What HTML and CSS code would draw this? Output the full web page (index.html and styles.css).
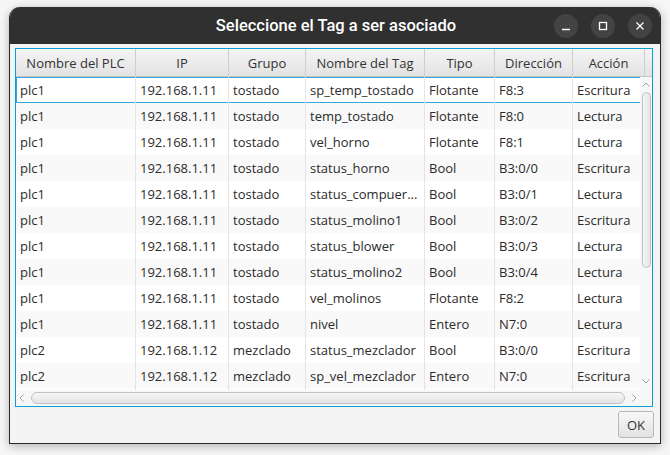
FILE: index.html
```html
<!DOCTYPE html>
<html>
<head>
<meta charset="utf-8">
<link rel="stylesheet" href="styles.css">
</head>
<body>
<div class="window">
  <div class="titlebar">
    <div class="title">Seleccione el Tag a ser asociado</div>
    <div class="wbtns">
      <div class="wbtn"><svg width="10" height="10" viewBox="0 0 10 10"><path d="M1 8.5h8" stroke="#fff" stroke-width="1.4"/></svg></div>
      <div class="wbtn"><svg width="10" height="10" viewBox="0 0 10 10"><rect x="1.5" y="1.5" width="7" height="7" fill="none" stroke="#fff" stroke-width="1.3"/></svg></div>
      <div class="wbtn"><svg width="10" height="10" viewBox="0 0 10 10"><path d="M1.5 1.5l7 7M8.5 1.5l-7 7" stroke="#fff" stroke-width="1.3"/></svg></div>
    </div>
  </div>
  <div class="content">
    <div class="table">
      <div class="header">
        <div class="hc c1">Nombre del PLC</div>
        <div class="hc c2">IP</div>
        <div class="hc c3">Grupo</div>
        <div class="hc c4">Nombre del Tag</div>
        <div class="hc c5">Tipo</div>
        <div class="hc c6">Dirección</div>
        <div class="hc c7">Acción</div>
        <div class="hc filler"></div>
      </div>
      <div class="body">
        <div class="rows">
          <div class="row focus"><div class="cell c1">plc1</div><div class="cell c2">192.168.1.11</div><div class="cell c3">tostado</div><div class="cell c4">sp_temp_tostado</div><div class="cell c5">Flotante</div><div class="cell c6">F8:3</div><div class="cell c7">Escritura</div></div>
          <div class="row"><div class="cell c1">plc1</div><div class="cell c2">192.168.1.11</div><div class="cell c3">tostado</div><div class="cell c4">temp_tostado</div><div class="cell c5">Flotante</div><div class="cell c6">F8:0</div><div class="cell c7">Lectura</div></div>
          <div class="row"><div class="cell c1">plc1</div><div class="cell c2">192.168.1.11</div><div class="cell c3">tostado</div><div class="cell c4">vel_horno</div><div class="cell c5">Flotante</div><div class="cell c6">F8:1</div><div class="cell c7">Lectura</div></div>
          <div class="row"><div class="cell c1">plc1</div><div class="cell c2">192.168.1.11</div><div class="cell c3">tostado</div><div class="cell c4">status_horno</div><div class="cell c5">Bool</div><div class="cell c6">B3:0/0</div><div class="cell c7">Escritura</div></div>
          <div class="row"><div class="cell c1">plc1</div><div class="cell c2">192.168.1.11</div><div class="cell c3">tostado</div><div class="cell c4">status_compuer...</div><div class="cell c5">Bool</div><div class="cell c6">B3:0/1</div><div class="cell c7">Lectura</div></div>
          <div class="row"><div class="cell c1">plc1</div><div class="cell c2">192.168.1.11</div><div class="cell c3">tostado</div><div class="cell c4">status_molino1</div><div class="cell c5">Bool</div><div class="cell c6">B3:0/2</div><div class="cell c7">Escritura</div></div>
          <div class="row"><div class="cell c1">plc1</div><div class="cell c2">192.168.1.11</div><div class="cell c3">tostado</div><div class="cell c4">status_blower</div><div class="cell c5">Bool</div><div class="cell c6">B3:0/3</div><div class="cell c7">Lectura</div></div>
          <div class="row"><div class="cell c1">plc1</div><div class="cell c2">192.168.1.11</div><div class="cell c3">tostado</div><div class="cell c4">status_molino2</div><div class="cell c5">Bool</div><div class="cell c6">B3:0/4</div><div class="cell c7">Lectura</div></div>
          <div class="row"><div class="cell c1">plc1</div><div class="cell c2">192.168.1.11</div><div class="cell c3">tostado</div><div class="cell c4">vel_molinos</div><div class="cell c5">Flotante</div><div class="cell c6">F8:2</div><div class="cell c7">Lectura</div></div>
          <div class="row"><div class="cell c1">plc1</div><div class="cell c2">192.168.1.11</div><div class="cell c3">tostado</div><div class="cell c4">nivel</div><div class="cell c5">Entero</div><div class="cell c6">N7:0</div><div class="cell c7">Lectura</div></div>
          <div class="row"><div class="cell c1">plc2</div><div class="cell c2">192.168.1.12</div><div class="cell c3">mezclado</div><div class="cell c4">status_mezclador</div><div class="cell c5">Bool</div><div class="cell c6">B3:0/0</div><div class="cell c7">Escritura</div></div>
          <div class="row"><div class="cell c1">plc2</div><div class="cell c2">192.168.1.12</div><div class="cell c3">mezclado</div><div class="cell c4">sp_vel_mezclador</div><div class="cell c5">Entero</div><div class="cell c6">N7:0</div><div class="cell c7">Escritura</div></div>
          <div class="row stub"><div class="cell c1"></div><div class="cell c2"></div><div class="cell c3"></div><div class="cell c4"></div><div class="cell c5"></div><div class="cell c6"></div><div class="cell c7"></div></div>
        </div>
        <div class="vscroll">
          <svg class="arr" width="12" height="10" viewBox="0 0 12 10"><path d="M2.5 6.5L6 3l3.5 3.5" fill="none" stroke="#a0a0a0" stroke-width="1"/></svg>
          <div class="vtrack"><div class="vthumb"></div></div>
          <svg class="arr" width="12" height="10" viewBox="0 0 12 10"><path d="M2.5 3.5L6 7l3.5-3.5" fill="none" stroke="#a0a0a0" stroke-width="1"/></svg>
        </div>
      </div>
      <div class="hbar">
        <div class="hscroll">
          <svg class="harr" width="12" height="16" viewBox="0 0 12 16"><path d="M7.5 4.5L4 8l3.5 3.5" fill="none" stroke="#a0a0a0" stroke-width="1"/></svg>
          <div class="htrack"><div class="hthumb"></div></div>
          <svg class="harr" width="12" height="16" viewBox="0 0 12 16"><path d="M4.5 4.5L8 8l-3.5 3.5" fill="none" stroke="#a0a0a0" stroke-width="1"/></svg>
        </div>
        <div class="corner"></div>
      </div>
    </div>
    <div class="footer">
      <button class="ok">OK</button>
    </div>
  </div>
</div>
</body>
</html>
```

FILE: styles.css
```css
html, body {
  margin: 0;
  padding: 0;
}
body {
  background: #f6f6f6;
  width: 670px;
  height: 455px;
  overflow: hidden;
  font-family: "Open Sans", "Noto Sans", sans-serif;
}
.window {
  margin: 7px 0 0 9px;
  width: 650px;
  height: 436px;
  border: 1px solid #2a2a2a;
  border-top: none;
  border-radius: 11px 11px 0 0;
  background: #f4f4f4;
  box-shadow: 0 2px 10px rgba(0,0,0,0.28);
  display: flex;
  flex-direction: column;
  overflow: hidden;
}
.titlebar {
  height: 37px;
  background: #303030;
  display: flex;
  align-items: center;
  justify-content: center;
  position: relative;
  flex: none;
}
.title {
  color: #ffffff;
  font-family: "Roboto", "Noto Sans", sans-serif;
  font-weight: 500;
  font-size: 16.5px;
  margin-left: 2px;
}
.wbtns {
  position: absolute;
  right: 8px;
  top: 7px;
  display: flex;
  gap: 13px;
}
.wbtn {
  width: 24px;
  height: 24px;
  border-radius: 50%;
  background: #434343;
  display: flex;
  align-items: center;
  justify-content: center;
}
.content {
  flex: 1;
  display: flex;
  flex-direction: column;
  padding: 4px 7px 0 5px;
}
.table {
  height: 357px;
  border: 1px solid #0aa0d6;
  background: #fff;
  display: flex;
  flex-direction: column;
  font-size: 13px;
  color: #333;
}
.header {
  display: flex;
  height: 27px;
  border-bottom: 1px solid #c6c6c6;
  background: linear-gradient(#f4f4f4, #e3e3e3);
  flex: none;
}
.hc {
  box-sizing: border-box;
  border-right: 1px solid #cfcfcf;
  display: flex;
  align-items: center;
  justify-content: center;
  white-space: nowrap;
  padding-top: 1px;
}
.hc.filler {
  flex: 1;
  border-right: none;
}
.c1 { width: 120px; }
.c2 { width: 93px; }
.c3 { width: 77px; }
.c4 { width: 119px; }
.c5 { width: 70px; }
.c6 { width: 78px; }
.c7 { width: 72px; }
.body {
  flex: 1;
  display: flex;
  overflow: hidden;
}
.rows {
  width: 624px;
  overflow: hidden;
  flex: none;
}
.row {
  display: flex;
  height: 26px;
  width: 629px;
  box-sizing: border-box;
  background: #fff;
}
.row:nth-child(even) {
  background: #f9f9f9;
}
.row.focus {
  box-shadow: inset 0 0 0 1px #2fa7d8;
}
.row.focus .cell.c1 {
  box-shadow: inset 1px 0 0 #2fa7d8;
}
.cell {
  box-sizing: border-box;
  border-right: 1px solid #e4e4e4;
  display: flex;
  align-items: center;
  padding-left: 4px;
  white-space: nowrap;
  overflow: hidden;
  flex: none;
  color: #2b2b2b;
}
.vscroll {
  width: 12px;
  flex: none;
  display: flex;
  flex-direction: column;
  align-items: center;
  background: #f7f7f7;
}
.arr {
  flex: none;
  margin-top: 3px;
}
.vtrack {
  flex: 1;
  width: 12px;
  display: flex;
  flex-direction: column;
  align-items: center;
}
.vthumb {
  margin-top: 2px;
  width: 9px;
  height: 176px;
  border: 1px solid #c2c2c2;
  border-radius: 5px;
  background: linear-gradient(90deg, #f6f6f6, #e4e4e4);
  box-sizing: border-box;
}
.vscroll .arr:last-child {
  margin-bottom: 4px;
}
.hbar {
  height: 16px;
  display: flex;
  flex: none;
  background: #f7f7f7;
}
.hscroll {
  width: 624px;
  display: flex;
  align-items: center;
}
.harr {
  flex: none;
}
.htrack {
  flex: 1;
  display: flex;
  align-items: center;
  padding: 0 3px;
}
.hthumb {
  width: 100%;
  height: 12px;
  border: 1px solid #c2c2c2;
  border-radius: 6px;
  background: linear-gradient(#f6f6f6, #e4e4e4);
  box-sizing: border-box;
}
.corner {
  flex: 1;
  background: #f7f7f7;
}
.footer {
  display: flex;
  justify-content: flex-end;
  padding-top: 4px;
}
.ok {
  width: 36px;
  height: 27px;
  border: 1px solid #b8b8b8;
  border-radius: 3px;
  background: linear-gradient(#f8f8f8, #e2e2e2);
  font-family: "Open Sans", "Noto Sans", sans-serif;
  font-size: 13px;
  color: #333;
  padding: 0;
  margin-right: -1px;
}
```
